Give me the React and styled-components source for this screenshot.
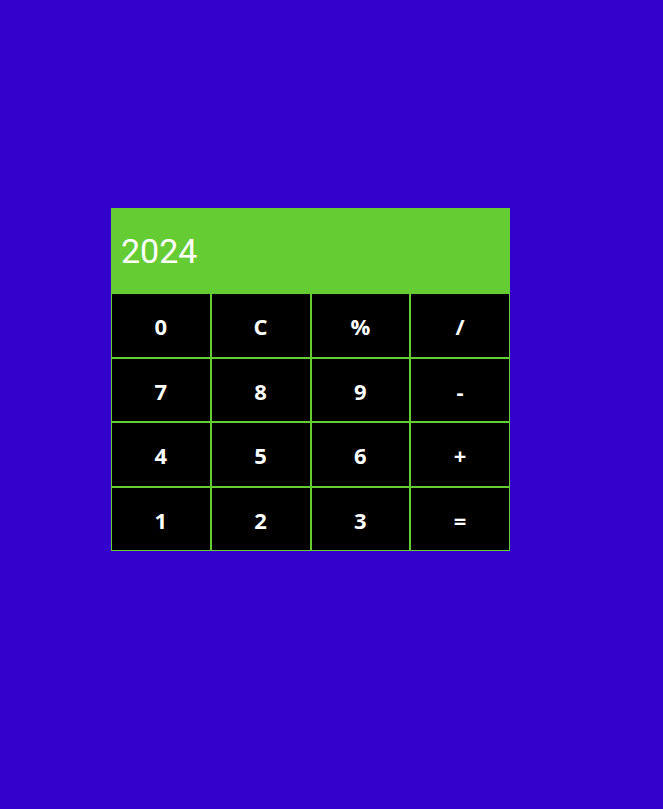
import React from "react";
import styled, { createGlobalStyle } from "styled-components";

const Global = createGlobalStyle`
  html, body { margin: 0; padding: 0; background: #3300cc; }
  body { min-height: 809px; }
  * { box-sizing: border-box; }
`;

const Page = styled.div`
  padding: 208px 0 0 111px;
`;

const Calculator = styled.div`
  width: 399px;
`;

const Display = styled.div`
  height: 85px;
  background: #66cc33;
  color: #ffffff;
  font-family: Roboto, "Liberation Sans", sans-serif;
  font-size: 34px;
  display: flex;
  align-items: center;
  padding-left: 10px;
`;

const Keys = styled.div`
  display: grid;
  grid-template-columns: repeat(4, 1fr);
  grid-auto-rows: 64.5px;
`;

const Key = styled.button`
  background: #000000;
  color: #ffffff;
  border: 1px solid #66cc33;
  font-family: "Open Sans", "Noto Sans", sans-serif;
  font-weight: 700;
  font-size: 22px;
  padding: 2px 0 0;
  cursor: pointer;
`;

const keys = ["0", "C", "%", "/", "7", "8", "9", "-", "4", "5", "6", "+", "1", "2", "3", "="];

export default function App() {
  return (
    <Page>
      <Global />
      <Calculator>
        <Display>2024</Display>
        <Keys>
          {keys.map((k) => (
            <Key key={k}>{k}</Key>
          ))}
        </Keys>
      </Calculator>
    </Page>
  );
}
